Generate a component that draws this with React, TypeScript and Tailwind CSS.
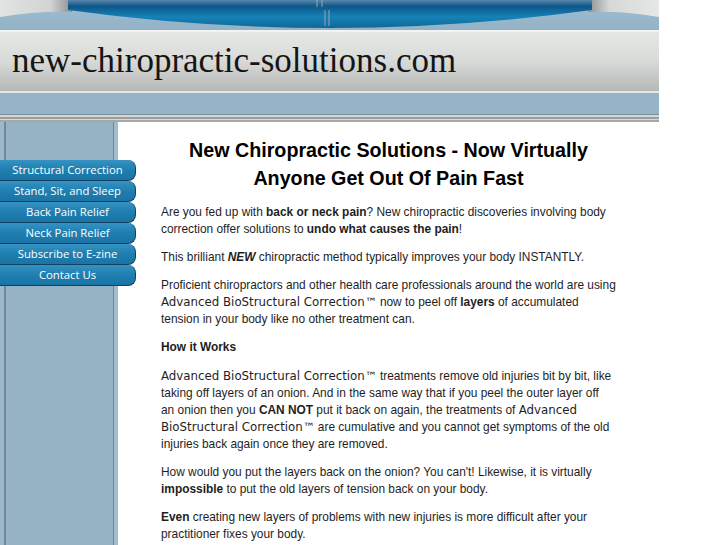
import * as React from 'react';

const navItems = [
  'Structural Correction',
  'Stand, Sit, and Sleep',
  'Back Pain Relief',
  'Neck Pain Relief',
  'Subscribe to E-zine',
  'Contact Us',
];

// the trademarked method name shows up in a wider font on the original page
const Abc = () => (
  <span className="font-['DejaVu_Sans',sans-serif] text-[11.8px]">Advanced BioStructural Correction™</span>
);

const TopBanner = () => (
  <svg width="659" height="30" viewBox="0 0 659 30" className="block">
    <defs>
      <linearGradient id="band" x1="0" y1="0" x2="0" y2="1">
        <stop offset="0" stopColor="#5b88ad" />
        <stop offset="0.22" stopColor="#0c5789" />
        <stop offset="0.6" stopColor="#1682b7" />
        <stop offset="1" stopColor="#0f6898" />
      </linearGradient>
      <linearGradient id="silverL" x1="0" y1="0" x2="1" y2="0">
        <stop offset="0" stopColor="#e2e4e4" />
        <stop offset="0.7" stopColor="#d2d4d4" />
        <stop offset="1" stopColor="#8d9090" />
      </linearGradient>
      <linearGradient id="silverR" x1="0" y1="0" x2="1" y2="0">
        <stop offset="0" stopColor="#8d9090" />
        <stop offset="0.3" stopColor="#d6d8d8" />
        <stop offset="1" stopColor="#e6e8e8" />
      </linearGradient>
      <linearGradient id="wave" x1="0" y1="0" x2="0" y2="1">
        <stop offset="0" stopColor="#a2bed0" />
        <stop offset="1" stopColor="#93b2c6" />
      </linearGradient>
    </defs>
    <rect width="659" height="30" fill="url(#wave)" />
    <path d="M0 0 H72 V12 Q36 11 0 17 Z" fill="url(#silverL)" />
    <path d="M588 0 H659 V17 Q624 11 588 12 Z" fill="url(#silverR)" />
    <path d="M68 0 H592 V10 Q330 46 68 10 Z" fill="url(#band)" />
    <path d="M317 0 V7 M322 0 V7 M325 10 V26 M329 10 V26" stroke="#9aa6ae" strokeWidth="1" />
  </svg>
);

export default function App() {
  return (
    <div className="min-h-screen bg-white font-['Liberation_Sans',Arial,sans-serif]">
      <div className="w-[659px]">
        <TopBanner />
        <div className="h-[2px] bg-[#f2f4f4]" />
        <div className="h-[59px] bg-linear-to-b from-[#e6e8e6] via-[#d8dad8] to-[#b6b8b8] pl-[12px] pt-[11px]">
          <div className="font-['Liberation_Serif',serif] text-[35px] leading-[35px] text-[#151515]">
            new-chiropractic-solutions.com
          </div>
        </div>
        <div className="h-[2px] bg-[#e4e8ea]" />
        <div className="h-[21px] bg-[#95b4c8]" />
        <div className="h-px bg-[#7c8e98]" />
        <div className="h-[2px] bg-[#d6d8d8]" />
        <div className="h-[2px] bg-[#9c9e9e]" />
        <div className="h-px bg-[#d8dada]" />
        <div className="h-[2px] bg-[#a6a8a8]" />

        <div className="flex">
          <div className="w-[118px] shrink-0 bg-[linear-gradient(to_right,#9cb8ca_0_4px,#6c8a9c_4px_6px,#96b3c5_6px_113px,#6c8a9c_113px_114px,#a2bccc_114px_118px)] pt-[38px]">
            <div className="flex flex-col">
              {navItems.map((item) => (
                <div
                  key={item}
                  className="relative z-10 flex h-[21px] w-[136px] items-center justify-center rounded-r-[8px] border-r border-b-[1.5px] border-[#0d4262] bg-linear-to-b from-[#3592c2] via-[#1f7fb0] to-[#1a74a4] font-['Open_Sans',sans-serif] text-[11.3px] text-white"
                >
                  {item}
                </div>
              ))}
            </div>
          </div>

          <div className="min-w-0 flex-1 px-[43px] pt-[14px] text-[11.9px] leading-[17px] text-[#1e1e1e]">
            <h1 className="mb-[11.5px] text-center text-[19.7px] leading-[28px] font-bold text-black">
              New Chiropractic Solutions - Now Virtually Anyone Get Out Of Pain Fast
            </h1>
            <p className="mb-[11.5px]">
              Are you fed up with <b>back or neck pain</b>? New chiropractic discoveries involving body correction offer
              solutions to <b>undo what causes the pain</b>!
            </p>
            <p className="mb-[11px]">
              This brilliant <b><i>NEW</i></b> chiropractic method typically improves your body INSTANTLY.
            </p>
            <p className="mb-[11px]">
              Proficient chiropractors and other health care professionals around the world are using <Abc /> now to peel
              off <b>layers</b> of accumulated tension in your body like no other treatment can.
            </p>
            <p className="mb-[11.5px] font-bold">How it Works</p>
            <p className="mb-[11px]">
              <Abc /> treatments remove old injuries bit by bit, like taking off layers of an onion. And in the same way
              that if you peel the outer layer off an{'\u00a0'}onion then you <b>CAN NOT</b> put it back on again, the
              treatments of <Abc /> are cumulative and you cannot get symptoms of the old injuries back again once they
              are removed.
            </p>
            <p className="mb-[11px]">
              How would you put the layers back on the onion? You can't! Likewise, it is virtually <b>impossible</b> to
              put the old layers of tension back on your body.
            </p>
            <p className="mb-[11px]">
              <b>Even</b> creating new layers of problems with new injuries is more difficult after your practitioner
              fixes your body.
            </p>
          </div>
        </div>
      </div>
    </div>
  );
}
